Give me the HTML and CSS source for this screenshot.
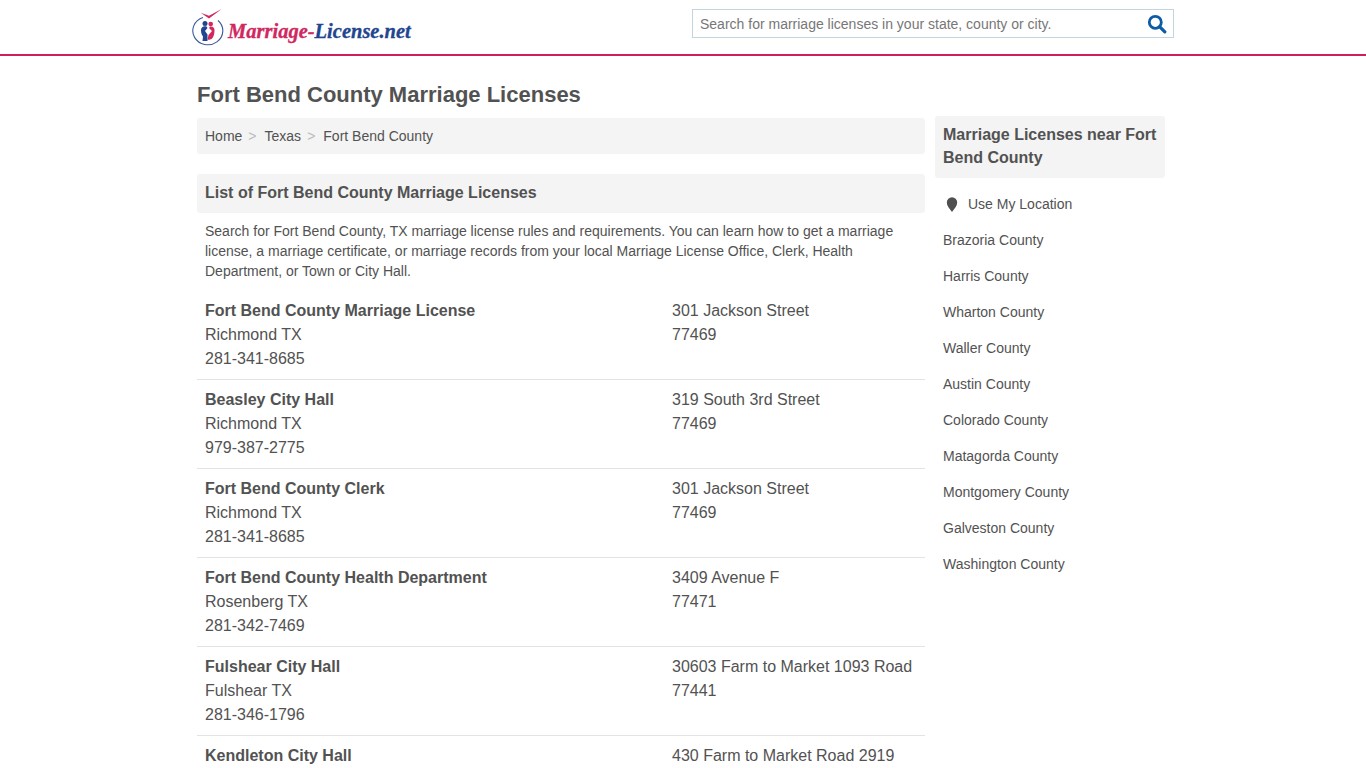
FILE: index.html
```html
<!DOCTYPE html>
<html lang="en">
<head>
<meta charset="utf-8">
<title>Fort Bend County Marriage Licenses</title>
<link rel="stylesheet" href="styles.css">
</head>
<body>
<header class="site-header">
  <div class="header-inner">
    <a class="logo" href="#">
      <svg class="logo-mark" width="32" height="38" viewBox="0 0 32 38">
        <path d="M11 9.500A15 14 0 1 0 26 12.500" fill="none" stroke="#3b5a9e" stroke-width="1.100"/>
        <path d="M8.700 4.700L17 7.800 29.700 1 17 10.500z" fill="#d0285f"/>
        <circle cx="13" cy="15.500" r="2.500" fill="#22458f"/>
        <circle cx="18.700" cy="16" r="2.300" fill="#d0285f"/>
        <path d="M9 22c0-3 3-4.500 5.500-3.500l1 1.500-2.500 3 2.500 3.500v6.500H10.500l.5-4.500c-1.500-2-2-4-2-6.500z" fill="#22458f"/>
        <path d="M22.500 22c0-2.500-2-4-4.500-3.500l-1 1.500 3 3-3.500 4-1 4.500c2 .5 4 0 5-1.500 1.500-2 2-5 2-8z" fill="#d0285f"/>
      </svg>
      <span class="logo-text"><span class="logo-pink">Marriage-</span><span class="logo-blue">License.net</span></span>
    </a>
    <form class="search">
      <span class="search-text">Search for marriage licenses in your state, county or city.</span>
      <svg class="search-icon" width="20" height="20" viewBox="0 0 20 20">
        <circle cx="8.300" cy="8.300" r="6" fill="none" stroke="#0d5aa7" stroke-width="2.800"/>
        <path d="M12.800 12.800l5 5" stroke="#0d5aa7" stroke-width="3.200" stroke-linecap="round"/>
      </svg>
    </form>
  </div>
</header>
<div class="page">
  <h1 class="title">Fort Bend County Marriage Licenses</h1>
  <div class="columns">
    <main class="main">
      <nav class="crumbs">
        <a href="#">Home</a><span class="sep">&gt;</span><a href="#">Texas</a><span class="sep">&gt;</span><a href="#">Fort Bend County</a>
      </nav>
      <h2 class="bar">List of Fort Bend County Marriage Licenses</h2>
      <p class="intro">Search for Fort Bend County, TX marriage license rules and requirements. You can learn how to get a marriage license, a marriage certificate, or marriage records from your local Marriage License Office, Clerk, Health Department, or Town or City Hall.</p>
      <div class="item">
        <div class="col-a"><a class="name" href="#">Fort Bend County Marriage License</a><div>Richmond TX</div><div>281-341-8685</div></div>
        <div class="col-b"><div>301 Jackson Street</div><div>77469</div></div>
      </div>
      <div class="item">
        <div class="col-a"><a class="name" href="#">Beasley City Hall</a><div>Richmond TX</div><div>979-387-2775</div></div>
        <div class="col-b"><div>319 South 3rd Street</div><div>77469</div></div>
      </div>
      <div class="item">
        <div class="col-a"><a class="name" href="#">Fort Bend County Clerk</a><div>Richmond TX</div><div>281-341-8685</div></div>
        <div class="col-b"><div>301 Jackson Street</div><div>77469</div></div>
      </div>
      <div class="item">
        <div class="col-a"><a class="name" href="#">Fort Bend County Health Department</a><div>Rosenberg TX</div><div>281-342-7469</div></div>
        <div class="col-b"><div>3409 Avenue F</div><div>77471</div></div>
      </div>
      <div class="item">
        <div class="col-a"><a class="name" href="#">Fulshear City Hall</a><div>Fulshear TX</div><div>281-346-1796</div></div>
        <div class="col-b"><div>30603 Farm to Market 1093 Road</div><div>77441</div></div>
      </div>
      <div class="item">
        <div class="col-a"><a class="name" href="#">Kendleton City Hall</a></div>
        <div class="col-b"><div>430 Farm to Market Road 2919</div></div>
      </div>
    </main>
    <aside class="side">
      <h2 class="side-title">Marriage Licenses near Fort Bend County</h2>
      <ul class="side-list">
        <li class="use-loc"><svg class="pin" width="12" height="15" viewBox="0 0 12 15"><path d="M6 15C3.500 11.500 .8 8.800 .8 5.500a5.200 5.200 0 0 1 10.400 0C11.200 8.800 8.500 11.500 6 15z" fill="#505050"/></svg><a href="#">Use My Location</a></li>
        <li><a href="#">Brazoria County</a></li>
        <li><a href="#">Harris County</a></li>
        <li><a href="#">Wharton County</a></li>
        <li><a href="#">Waller County</a></li>
        <li><a href="#">Austin County</a></li>
        <li><a href="#">Colorado County</a></li>
        <li><a href="#">Matagorda County</a></li>
        <li><a href="#">Montgomery County</a></li>
        <li><a href="#">Galveston County</a></li>
        <li><a href="#">Washington County</a></li>
      </ul>
    </aside>
  </div>
</div>
</body>
</html>
```
FILE: styles.css
```css
* { box-sizing: border-box; }
html, body { margin: 0; padding: 0; height: 768px; overflow: hidden; }
body { font-family: "Liberation Sans", Arial, sans-serif; color: #525252; background: #fff; }
a { color: inherit; text-decoration: none; }

.site-header { height: 56px; border-bottom: 2px solid #cf1f5b; }
.header-inner { width: 982px; margin-left: 192px; height: 54px; display: flex; align-items: flex-start; justify-content: space-between; }
.logo { display: flex; align-items: flex-start; margin-top: 8px; }
.logo-mark { display: block; }
.logo-text { font-family: "Liberation Serif", serif; font-style: italic; font-weight: 700; font-size: 20.500px; line-height: 26px; margin: 10px 0 0 4px; white-space: nowrap; -webkit-text-stroke: 0.3px currentColor; }
.logo-pink { color: #d0285f; }
.logo-blue { color: #22458f; }
.search { width: 482px; height: 29px; margin-top: 9px; border: 1px solid #c5d5dd; display: flex; align-items: center; justify-content: space-between; padding: 0 6px 0 7px; }
.search-text { font-size: 14px; color: #777; }
.search-icon { display: block; }

.page { width: 968px; margin-left: 197px; }
.title { margin: 0; padding-top: 25px; font-size: 22px; line-height: 27px; font-weight: 700; height: 60px; }
.columns { display: flex; gap: 10px; align-items: flex-start; }
.main { width: 728px; margin-top: 2px; }
.crumbs { height: 36px; background: #f4f4f4; border-radius: 3px; padding: 0 8px; display: flex; align-items: center; font-size: 14px; }
.sep { color: #bbb; margin: 0 8px 0 6px; }
.bar { margin: 20px 0 0; height: 39px; background: #f4f4f4; border-radius: 3px; padding: 0 8px; font-size: 16px; line-height: 38px; font-weight: 700; }
.intro { margin: 8px 0 0; padding: 0 8px; font-size: 14px; line-height: 20px; height: 70px; }
.item { display: flex; height: 89px; padding: 8px 8px 0; border-bottom: 1px solid #e3e3e3; font-size: 16px; line-height: 24px; }
.col-a { width: 467px; }
.name { font-weight: 700; display: block; }
.side { width: 230px; }
.side-title { margin: 0; padding: 7px 8px 9px; background: #f4f4f4; border-radius: 3px; font-size: 16px; line-height: 23px; font-weight: 700; }
.side-list { list-style: none; margin: 8px 0 0; padding: 0 8px; font-size: 14px; }
.side-list li { height: 36px; line-height: 36px; }
.use-loc { display: flex; align-items: center; }
.pin { margin: 0 10px 0 3px; }
```
